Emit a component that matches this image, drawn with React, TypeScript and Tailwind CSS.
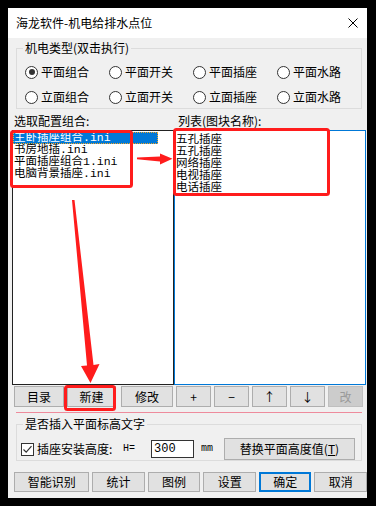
import React from "react";

const radios = [
  ["平面组合", "平面开关", "平面插座", "平面水路"],
  ["立面组合", "立面开关", "立面插座", "立面水路"],
];

const configs = ["主卧插座组合.ini", "书房地插.ini", "平面插座组合1.ini", "电脑背景插座.ini"];
const blocks = ["五孔插座", "五孔插座", "网络插座", "电视插座", "电话插座"];

function Radio({ label, checked }: { label: string; checked?: boolean }) {
  return (
    <div className="flex h-[16px] items-center">
      <span className="flex h-[13px] w-[13px] items-center justify-center rounded-full border border-[#333] bg-white">
        {checked && <span className="h-[6px] w-[6px] rounded-full bg-[#333]" />}
      </span>
      <span className="ml-[3px] leading-[16px]">{label}</span>
    </div>
  );
}

function Btn({
  children,
  className = "",
  disabled,
  primary,
}: {
  children: React.ReactNode;
  className?: string;
  disabled?: boolean;
  primary?: boolean;
}) {
  return (
    <div
      className={
        "flex items-center justify-center leading-[14px] " +
        (disabled
          ? "border border-[#bfbfbf] bg-[#cccccc] text-[#9a9a9a] "
          : primary
            ? "border-2 border-[#0078d7] bg-[#e1e1e1] "
            : "border border-[#adadad] bg-[#e1e1e1] ") +
        className
      }
    >
      {children}
    </div>
  );
}

function GroupBox({ title, className, children }: { title: string; className: string; children: React.ReactNode }) {
  return (
    <div className={"relative ml-[8px] w-[346px] border border-[#dcdcdc] " + className}>
      <span className="absolute left-[6px] top-[-9px] bg-[#f0f0f0] px-[2px] leading-[16px]">{title}</span>
      {children}
    </div>
  );
}

export default function App() {
  return (
    <div className="relative h-[506px] w-[376px] bg-black pl-[8px] pt-[8px] font-['Noto_Sans_CJK_SC',sans-serif] text-[12px] text-black">
      <div className="flex h-[490px] w-[359px] flex-col bg-[#f0f0f0]">
        {/* title bar */}
        <div className="flex h-[30px] items-center justify-between bg-white pl-[8px] pr-[9px]">
          <span className="leading-[16px]">海龙软件-机电给排水点位</span>
          <svg width="10" height="10" viewBox="0 0 10 10">
            <path d="M0.5 0.5L9.5 9.5M9.5 0.5L0.5 9.5" stroke="#000" strokeWidth="1" />
          </svg>
        </div>

        <GroupBox title="机电类型(双击执行)" className="mt-[10px] pb-[3px] pl-[8px] pt-[15px]">
          <div className="grid grid-cols-[84px_84px_84px_84px] gap-y-[9px]">
            {radios.flat().map((r, i) => (
              <Radio key={i} label={r} checked={i === 0} />
            ))}
          </div>
        </GroupBox>

        {/* lists */}
        <div className="mt-[4px] flex pl-[4px]">
          <div className="flex w-[162px] flex-col">
            <span className="h-[17px] pl-[2px] leading-[16px]">选取配置组合:</span>
            <div className="h-[255px] border border-[#222] bg-white pt-[1px] font-['Liberation_Mono','Noto_Sans_CJK_SC',monospace] text-[11.5px]">
              {configs.map((c, i) => (
                <div
                  key={c}
                  className={
                    "h-[12px] whitespace-nowrap pl-[1px] leading-[12px] " +
                    (i === 0 ? "w-[145px] bg-[#0078d7] text-white outline-1 outline-dotted outline-[#f5a623] -outline-offset-1" : "")
                  }
                >
                  {c}
                </div>
              ))}
            </div>
          </div>
          <div className="flex w-[192px] flex-col">
            <span className="h-[17px] pl-[4px] leading-[16px]">列表(图块名称):</span>
            <div className="h-[255px] border border-[#0078d7] bg-white pt-[1px] text-[11.5px]">
              {blocks.map((b, i) => (
                <div key={i} className="h-[12px] whitespace-nowrap pl-[1px] leading-[12px]">
                  {b}
                </div>
              ))}
            </div>
          </div>
        </div>

        {/* list buttons */}
        <div className="mt-[1px] flex h-[21px] pl-[6px]">
          <Btn className="w-[50px]">目录</Btn>
          <Btn className="ml-[3px] w-[49px]">新建</Btn>
          <Btn className="ml-[5px] w-[52px]">修改</Btn>
          <Btn className="ml-[3px] w-[35px]">+</Btn>
          <Btn className="ml-[3px] w-[35px]">−</Btn>
          <Btn className="ml-[3px] w-[35px]">↑</Btn>
          <Btn className="ml-[3px] w-[35px]">↓</Btn>
          <Btn className="ml-[3px] w-[35px]" disabled>
            改
          </Btn>
        </div>

        <div className="ml-[8px] mt-[5px] h-px w-[346px] bg-[#ee8b9c]" />

        <GroupBox title="是否插入平面标高文字" className="mt-[11px] pt-[13px]">
          <div className="flex h-[22px] items-center">
            <span className="ml-[4px] flex h-[13px] w-[13px] items-center justify-center border border-[#333] bg-white">
              <svg width="11" height="11" viewBox="0 0 11 11">
                <path d="M1.5 5.5L4.2 8.2L9.5 2.2" stroke="#333" strokeWidth="1.2" fill="none" />
              </svg>
            </span>
            <span className="ml-[3px] w-[86px] leading-[16px]">插座安装高度:</span>
            <span className="w-[28px] font-['Liberation_Mono',monospace] text-[10px] leading-[14px]">H=</span>
            <div className="flex h-[18px] w-[43px] items-center border border-[#333] bg-white pl-[2px] font-['Liberation_Mono',monospace] leading-[14px]">
              300
            </div>
            <span className="w-[30px] pl-[7px] font-['Liberation_Mono',monospace] text-[10px] leading-[14px] text-black">mm</span>
            <Btn className="h-[22px] w-[131px]">
              替换平面高度值(<span className="underline">T</span>)
            </Btn>
          </div>
        </GroupBox>

        {/* bottom buttons */}
        <div className="mt-[11px] flex h-[20px] pl-[6px]">
          <Btn className="w-[76px]">智能识别</Btn>
          <Btn className="ml-[3px] w-[53px]">统计</Btn>
          <Btn className="ml-[3px] w-[53px]">图例</Btn>
          <Btn className="ml-[3px] w-[53px]">设置</Btn>
          <Btn className="ml-[3px] w-[53px]" primary>
            确定
          </Btn>
          <Btn className="ml-[3px] w-[53px]">取消</Btn>
        </div>
      </div>

      {/* red annotations */}
      <svg className="pointer-events-none absolute left-0 top-0" width="376" height="506" viewBox="0 0 376 506">
        <g fill="none" stroke="#ff1c1c" strokeWidth="3">
          <rect x="11.5" y="131.5" width="120" height="55" rx="2" />
          <rect x="174.5" y="129.5" width="154" height="65" rx="2" />
          <rect x="65.5" y="386.5" width="49" height="23" rx="2" />
        </g>
        <g fill="#ff1c1c">
          <polygon points="137,157.6 160,156.5 160,153.5 172.5,158.8 160,164.5 160,161.5 137,159.2" />
          <polygon points="72,200 74.5,200 93.5,365 99.5,364 90.5,383 81,366 87,365.6" />
        </g>
      </svg>
    </div>
  );
}
